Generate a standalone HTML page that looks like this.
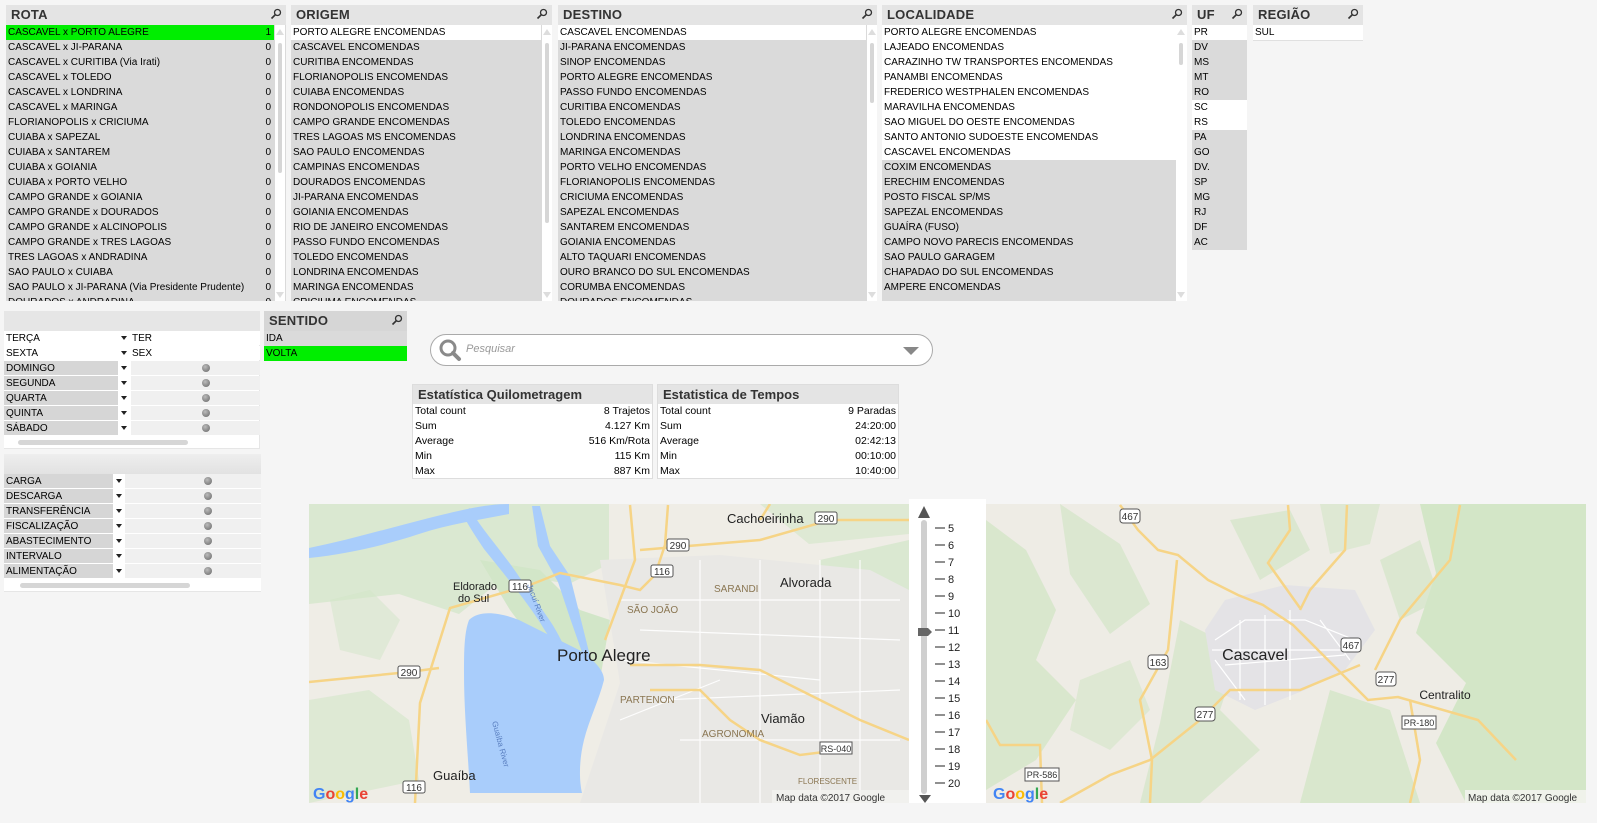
<!DOCTYPE html>
<html><head><meta charset="utf-8">
<style>
*{margin:0;padding:0;box-sizing:border-box}
body{width:1597px;height:823px;background:#f5f5f5;font-family:"Liberation Sans",sans-serif;font-size:10px;color:#000;position:relative;overflow:hidden}
.abs{position:absolute}
.lb{position:absolute;background:#fff;overflow:hidden}
.hd{position:absolute;left:0;right:0;top:0;height:20px;background:#e4e4e4;font-size:13px;color:#333;padding-left:5px;line-height:20px;font-weight:bold;letter-spacing:0.2px}
.mg{position:absolute;right:4px;top:3px;width:12px;height:12px}
.rows{position:absolute;left:0;top:20px}
.r{height:15px;line-height:15px;padding-left:2px;white-space:nowrap;background:#dadada;position:relative}
.w{background:#fff}
.g{background:#00ee00}
.n{position:absolute;right:3px;top:0}
.sb{position:absolute;top:20px;bottom:0;width:10px;background:#fff}
.sb .th{position:absolute;left:3px;width:4px;background:#d6d6d6;border-radius:2px}
.sb .up,.sb .dn{position:absolute;left:1px;width:0;height:0;border-left:4px solid transparent;border-right:4px solid transparent}
.sb .up{top:4px;border-bottom:6px solid #ddd}
.sb .dn{bottom:3px;border-top:6px solid #ddd}
.tb .row{position:absolute;left:0;height:15px;line-height:15px;width:100%}
.tb .lab{position:absolute;left:0;top:0;height:14px;background:#d6d6d6;padding-left:2px}
.tb .ar{position:absolute;top:5px;width:0;height:0;border-left:3px solid transparent;border-right:3px solid transparent;border-top:4px solid #222}
.tb .val{position:absolute;top:0;height:14px;background:#f0f0f0;padding-left:1px}
.tb .dot{position:absolute;top:3px;width:8px;height:8px;border-radius:50%;background:radial-gradient(circle at 40% 35%,#bbb,#666)}
.st{position:absolute;background:#fff;border:1px solid #ddd;font-size:10.5px}
.st .h{height:19px;background:#e4e4e4;font-size:13px;font-weight:bold;color:#333;padding-left:5px;line-height:19px}
.st .rr{height:15px;line-height:15px;padding:0 2px;display:flex;justify-content:space-between}
</style></head><body>

<!-- ROTA -->
<div class="lb" style="left:6px;top:5px;width:280px;height:296px;background:#dadada">
<div class="hd">ROTA<svg class="mg" viewBox="0 0 12 12"><circle cx="7.5" cy="4.5" r="3" fill="none" stroke="#333" stroke-width="1.3"/><path d="M5.5 6.5L1.5 10.5" stroke="#333" stroke-width="1.6"/></svg></div>
<div class="rows" style="width:268px">
<div class="r g">CASCAVEL x PORTO ALEGRE<span class="n">1</span></div>
<div class="r">CASCAVEL x JI-PARANA<span class="n">0</span></div>
<div class="r">CASCAVEL x CURITIBA (Via Irati)<span class="n">0</span></div>
<div class="r">CASCAVEL x TOLEDO<span class="n">0</span></div>
<div class="r">CASCAVEL x LONDRINA<span class="n">0</span></div>
<div class="r">CASCAVEL x MARINGA<span class="n">0</span></div>
<div class="r">FLORIANOPOLIS x CRICIUMA<span class="n">0</span></div>
<div class="r">CUIABA x SAPEZAL<span class="n">0</span></div>
<div class="r">CUIABA x SANTAREM<span class="n">0</span></div>
<div class="r">CUIABA x GOIANIA<span class="n">0</span></div>
<div class="r">CUIABA x PORTO VELHO<span class="n">0</span></div>
<div class="r">CAMPO GRANDE x GOIANIA<span class="n">0</span></div>
<div class="r">CAMPO GRANDE x DOURADOS<span class="n">0</span></div>
<div class="r">CAMPO GRANDE x ALCINOPOLIS<span class="n">0</span></div>
<div class="r">CAMPO GRANDE x TRES LAGOAS<span class="n">0</span></div>
<div class="r">TRES LAGOAS x ANDRADINA<span class="n">0</span></div>
<div class="r">SAO PAULO x CUIABA<span class="n">0</span></div>
<div class="r">SAO PAULO x JI-PARANA (Via Presidente Prudente)<span class="n">0</span></div>
<div class="r">DOURADOS x ANDRADINA<span class="n">0</span></div>
</div>
<div class="sb" style="left:269px"><div class="up"></div><div class="th" style="top:18px;height:130px"></div><div class="dn"></div></div>
</div>

<!-- ORIGEM -->
<div class="lb" style="left:291px;top:5px;width:261px;height:296px;background:#dadada">
<div class="hd">ORIGEM<svg class="mg" viewBox="0 0 12 12"><circle cx="7.5" cy="4.5" r="3" fill="none" stroke="#333" stroke-width="1.3"/><path d="M5.5 6.5L1.5 10.5" stroke="#333" stroke-width="1.6"/></svg></div>
<div class="rows" style="width:250px">
<div class="r w">PORTO ALEGRE ENCOMENDAS</div>
<div class="r">CASCAVEL ENCOMENDAS</div>
<div class="r">CURITIBA ENCOMENDAS</div>
<div class="r">FLORIANOPOLIS ENCOMENDAS</div>
<div class="r">CUIABA ENCOMENDAS</div>
<div class="r">RONDONOPOLIS ENCOMENDAS</div>
<div class="r">CAMPO GRANDE ENCOMENDAS</div>
<div class="r">TRES LAGOAS MS ENCOMENDAS</div>
<div class="r">SAO PAULO ENCOMENDAS</div>
<div class="r">CAMPINAS ENCOMENDAS</div>
<div class="r">DOURADOS ENCOMENDAS</div>
<div class="r">JI-PARANA ENCOMENDAS</div>
<div class="r">GOIANIA ENCOMENDAS</div>
<div class="r">RIO DE JANEIRO ENCOMENDAS</div>
<div class="r">PASSO FUNDO ENCOMENDAS</div>
<div class="r">TOLEDO ENCOMENDAS</div>
<div class="r">LONDRINA ENCOMENDAS</div>
<div class="r">MARINGA ENCOMENDAS</div>
<div class="r">CRICIUMA ENCOMENDAS</div>
</div>
<div class="sb" style="left:251px"><div class="up"></div><div class="th" style="top:18px;height:180px"></div><div class="dn"></div></div>
</div>

<!-- DESTINO -->
<div class="lb" style="left:558px;top:5px;width:319px;height:296px;background:#dadada">
<div class="hd">DESTINO<svg class="mg" viewBox="0 0 12 12"><circle cx="7.5" cy="4.5" r="3" fill="none" stroke="#333" stroke-width="1.3"/><path d="M5.5 6.5L1.5 10.5" stroke="#333" stroke-width="1.6"/></svg></div>
<div class="rows" style="width:308px">
<div class="r w">CASCAVEL ENCOMENDAS</div>
<div class="r">JI-PARANA ENCOMENDAS</div>
<div class="r">SINOP ENCOMENDAS</div>
<div class="r">PORTO ALEGRE ENCOMENDAS</div>
<div class="r">PASSO FUNDO ENCOMENDAS</div>
<div class="r">CURITIBA ENCOMENDAS</div>
<div class="r">TOLEDO ENCOMENDAS</div>
<div class="r">LONDRINA ENCOMENDAS</div>
<div class="r">MARINGA ENCOMENDAS</div>
<div class="r">PORTO VELHO ENCOMENDAS</div>
<div class="r">FLORIANOPOLIS ENCOMENDAS</div>
<div class="r">CRICIUMA ENCOMENDAS</div>
<div class="r">SAPEZAL ENCOMENDAS</div>
<div class="r">SANTAREM ENCOMENDAS</div>
<div class="r">GOIANIA ENCOMENDAS</div>
<div class="r">ALTO TAQUARI ENCOMENDAS</div>
<div class="r">OURO BRANCO DO SUL ENCOMENDAS</div>
<div class="r">CORUMBA ENCOMENDAS</div>
<div class="r">DOURADOS ENCOMENDAS</div>
</div>
<div class="sb" style="left:309px"><div class="up"></div><div class="th" style="top:18px;height:60px"></div><div class="dn"></div></div>
</div>

<!-- LOCALIDADE -->
<div class="lb" style="left:882px;top:5px;width:305px;height:296px">
<div class="hd">LOCALIDADE<svg class="mg" viewBox="0 0 12 12"><circle cx="7.5" cy="4.5" r="3" fill="none" stroke="#333" stroke-width="1.3"/><path d="M5.5 6.5L1.5 10.5" stroke="#333" stroke-width="1.6"/></svg></div>
<div class="rows" style="width:294px;background:#dadada;height:278px">
<div class="r w">PORTO ALEGRE ENCOMENDAS</div>
<div class="r w">LAJEADO ENCOMENDAS</div>
<div class="r w">CARAZINHO TW TRANSPORTES ENCOMENDAS</div>
<div class="r w">PANAMBI ENCOMENDAS</div>
<div class="r w">FREDERICO WESTPHALEN ENCOMENDAS</div>
<div class="r w">MARAVILHA ENCOMENDAS</div>
<div class="r w">SAO MIGUEL DO OESTE ENCOMENDAS</div>
<div class="r w">SANTO ANTONIO SUDOESTE ENCOMENDAS</div>
<div class="r w">CASCAVEL ENCOMENDAS</div>
<div class="r">COXIM ENCOMENDAS</div>
<div class="r">ERECHIM ENCOMENDAS</div>
<div class="r">POSTO FISCAL SP/MS</div>
<div class="r">SAPEZAL ENCOMENDAS</div>
<div class="r">GUAÍRA (FUSO)</div>
<div class="r">CAMPO NOVO PARECIS ENCOMENDAS</div>
<div class="r">SAO PAULO GARAGEM</div>
<div class="r">CHAPADAO DO SUL ENCOMENDAS</div>
<div class="r">AMPERE ENCOMENDAS</div>
</div>
<div class="sb" style="left:294px"><div class="up"></div><div class="th" style="top:18px;height:22px"></div><div class="dn"></div></div>
</div>

<!-- UF -->
<div class="lb" style="left:1192px;top:5px;width:55px;height:245px;background:#dadada">
<div class="hd">UF<svg class="mg" viewBox="0 0 12 12"><circle cx="7.5" cy="4.5" r="3" fill="none" stroke="#333" stroke-width="1.3"/><path d="M5.5 6.5L1.5 10.5" stroke="#333" stroke-width="1.6"/></svg></div>
<div class="rows" style="width:55px">
<div class="r w">PR</div><div class="r">DV</div><div class="r">MS</div><div class="r">MT</div><div class="r">RO</div><div class="r w">SC</div><div class="r w">RS</div><div class="r">PA</div><div class="r">GO</div><div class="r">DV.</div><div class="r">SP</div><div class="r">MG</div><div class="r">RJ</div><div class="r">DF</div><div class="r">AC</div>
</div></div>

<!-- REGIAO -->
<div class="lb" style="left:1253px;top:5px;width:110px;height:36px;border-bottom:1px solid #e0e0e0">
<div class="hd">REGIÃO<svg class="mg" viewBox="0 0 12 12"><circle cx="7.5" cy="4.5" r="3" fill="none" stroke="#333" stroke-width="1.3"/><path d="M5.5 6.5L1.5 10.5" stroke="#333" stroke-width="1.6"/></svg></div>
<div class="rows" style="width:110px"><div class="r w">SUL</div></div>
</div>

<!-- weekday table -->
<div class="abs tb" style="left:4px;top:311px;width:256px;height:138px;background:#fff;border-right:1px solid #e6e6e6;border-bottom:1px solid #e6e6e6">
<div style="height:20px;background:#e6e6e6"></div>
<div class="row" style="top:20px"><div class="lab" style="width:117px;background:#fff">TERÇA</div><div class="ar" style="left:117px"></div><div class="val" style="left:127px;width:129px;background:#fff">TER</div></div>
<div class="row" style="top:35px"><div class="lab" style="width:117px;background:#fff">SEXTA</div><div class="ar" style="left:117px"></div><div class="val" style="left:127px;width:129px;background:#fff">SEX</div></div>
<div class="row" style="top:50px"><div class="lab" style="width:114px">DOMINGO</div><div class="ar" style="left:117px"></div><div class="val" style="left:127px;width:129px"></div><div class="dot" style="left:198px"></div></div>
<div class="row" style="top:65px"><div class="lab" style="width:114px">SEGUNDA</div><div class="ar" style="left:117px"></div><div class="val" style="left:127px;width:129px"></div><div class="dot" style="left:198px"></div></div>
<div class="row" style="top:80px"><div class="lab" style="width:114px">QUARTA</div><div class="ar" style="left:117px"></div><div class="val" style="left:127px;width:129px"></div><div class="dot" style="left:198px"></div></div>
<div class="row" style="top:95px"><div class="lab" style="width:114px">QUINTA</div><div class="ar" style="left:117px"></div><div class="val" style="left:127px;width:129px"></div><div class="dot" style="left:198px"></div></div>
<div class="row" style="top:110px"><div class="lab" style="width:114px">SÁBADO</div><div class="ar" style="left:117px"></div><div class="val" style="left:127px;width:129px"></div><div class="dot" style="left:198px"></div></div>
<div class="abs" style="left:14px;top:129px;width:170px;height:5px;background:#d6d6d6;border-radius:3px"></div>
</div>

<!-- SENTIDO -->
<div class="lb" style="left:264px;top:311px;width:143px;height:50px;background:#dadada">
<div class="hd" style="background:#d6d6d6">SENTIDO<svg class="mg" viewBox="0 0 12 12"><circle cx="7.5" cy="4.5" r="3" fill="none" stroke="#333" stroke-width="1.3"/><path d="M5.5 6.5L1.5 10.5" stroke="#333" stroke-width="1.6"/></svg></div>
<div class="rows" style="width:143px"><div class="r">IDA</div><div class="r g">VOLTA</div></div>
</div>

<!-- second table -->
<div class="abs tb" style="left:4px;top:454px;width:257px;height:138px;background:#fff;border-bottom:1px solid #e6e6e6">
<div style="height:20px;background:linear-gradient(#eee,#e2e2e2)"></div>
<div class="row" style="top:20px"><div class="lab" style="width:109px">CARGA</div><div class="ar" style="left:112px"></div><div class="val" style="left:121px;width:136px"></div><div class="dot" style="left:200px"></div></div>
<div class="row" style="top:35px"><div class="lab" style="width:109px">DESCARGA</div><div class="ar" style="left:112px"></div><div class="val" style="left:121px;width:136px"></div><div class="dot" style="left:200px"></div></div>
<div class="row" style="top:50px"><div class="lab" style="width:109px">TRANSFERÊNCIA</div><div class="ar" style="left:112px"></div><div class="val" style="left:121px;width:136px"></div><div class="dot" style="left:200px"></div></div>
<div class="row" style="top:65px"><div class="lab" style="width:109px">FISCALIZAÇÃO</div><div class="ar" style="left:112px"></div><div class="val" style="left:121px;width:136px"></div><div class="dot" style="left:200px"></div></div>
<div class="row" style="top:80px"><div class="lab" style="width:109px">ABASTECIMENTO</div><div class="ar" style="left:112px"></div><div class="val" style="left:121px;width:136px"></div><div class="dot" style="left:200px"></div></div>
<div class="row" style="top:95px"><div class="lab" style="width:109px">INTERVALO</div><div class="ar" style="left:112px"></div><div class="val" style="left:121px;width:136px"></div><div class="dot" style="left:200px"></div></div>
<div class="row" style="top:110px"><div class="lab" style="width:109px">ALIMENTAÇÃO</div><div class="ar" style="left:112px"></div><div class="val" style="left:121px;width:136px"></div><div class="dot" style="left:200px"></div></div>
<div class="abs" style="left:16px;top:129px;width:170px;height:5px;background:#d6d6d6;border-radius:3px"></div>
</div>

<!-- search -->
<div class="abs" style="left:430px;top:334px;width:503px;height:32px;border:1px solid #aaa;border-radius:16px;background:#fff"></div>
<svg class="abs" style="left:437px;top:338px" width="28" height="26" viewBox="0 0 28 26"><circle cx="11" cy="10" r="7" fill="none" stroke="#8a8a8a" stroke-width="3"/><path d="M16 15L22 21" stroke="#8a8a8a" stroke-width="4" stroke-linecap="round"/></svg>
<div class="abs" style="left:466px;top:343px;font-size:11px;font-style:italic;color:#999">Pesquisar</div>
<div class="abs" style="left:903px;top:347px;width:0;height:0;border-left:8px solid transparent;border-right:8px solid transparent;border-top:8px solid #888"></div>

<!-- stats -->
<div class="st" style="left:412px;top:384px;width:241px;height:95px">
<div class="h">Estatística Quilometragem</div>
<div class="rr"><span>Total count</span><span>8 Trajetos</span></div>
<div class="rr"><span>Sum</span><span>4.127 Km</span></div>
<div class="rr"><span>Average</span><span>516 Km/Rota</span></div>
<div class="rr"><span>Min</span><span>115 Km</span></div>
<div class="rr"><span>Max</span><span>887 Km</span></div>
</div>
<div class="st" style="left:657px;top:384px;width:242px;height:95px">
<div class="h">Estatistica de Tempos</div>
<div class="rr"><span>Total count</span><span>9 Paradas</span></div>
<div class="rr"><span>Sum</span><span>24:20:00</span></div>
<div class="rr"><span>Average</span><span>02:42:13</span></div>
<div class="rr"><span>Min</span><span>00:10:00</span></div>
<div class="rr"><span>Max</span><span>10:40:00</span></div>
</div>

<!-- map 1 -->
<svg class="abs" style="left:309px;top:504px" width="600" height="299" viewBox="309 504 600 299" font-family="Liberation Sans, sans-serif">
<rect x="309" y="504" width="600" height="299" fill="#efede6"/>
<g fill="#d2e6c8">
<path d="M309 504h300v60l-40 20-60-10-50 40-60-20-90 10z" opacity=".7"/>
<path d="M480 560l60 10 40 40 30 10-10 60-40 20-20-50-30-40z"/>
<path d="M309 700l60-10 40 30 10 60-110 23z" opacity=".6"/>
<path d="M700 740l80-20 60 10 70-20v93H690z" opacity=".8"/>
<path d="M820 560l89-20v120l-60 10-40-40z" opacity=".7"/>
<path d="M760 504h149v30l-100 10z" opacity=".6"/>
<path d="M330 600l40-10 30 30-20 40-40-10z" opacity=".5"/>
</g>
<path d="M600 560l120 -5 150 15 39 20v213H580l40-120z" fill="#e9e8e5"/>
<g fill="#a9cdfb">
<path d="M309 548c40-8 80-20 120-30s60-14 80-14v10c-30 6-60 10-90 20s-70 20-110 24z"/>
<path d="M470 508c10 20 30 40 50 70s30 40 40 60c5 10 10 20 20 30l-6 6c-10-12-20-30-30-45-15-25-40-55-60-80-8-12-16-24-22-36z"/>
<path d="M540 506l10 40 20 30 10 40 10 40-6 2-14-40-12-36-20-36-6-40z"/>
<path d="M469 620c10-10 30-8 50 0 20 10 40 20 60 30 15 10 25 20 25 30-5 20-15 40-20 60-5 20-5 40-2 53H470c-2-40-6-80-6-120 0-20 0-40 5-53z"/>
</g>
<g fill="none" stroke="#fff" stroke-width="1.2" opacity=".9">
<path d="M620 600l280 0M640 630l260 10M620 660l200 20M660 700l240 -10M680 740l220 0M700 560v243M760 560v243M820 560v243M860 560v243M620 720l100-40"/>
</g>
<g fill="none" stroke="#f6d486" stroke-width="2.5">
<path d="M309 682l100-10 30-4"/>
<path d="M415 803l5-100 30-95 80-23 30-12 60 12 20 5 15-15 10-30 3-40"/>
<path d="M630 505l5 55-30 80"/>
<path d="M640 550l60-5 60-5 70-20h79"/>
<path d="M630 665l70 0 60 5 40 20 60 30 49 20"/>
<path d="M650 690l50 0 30 30 30 20 40 15 40-5"/>
<path d="M760 520l10-16"/>
</g>
<g font-size="10" fill="#333" text-anchor="middle">
<rect x="815" y="512" width="22" height="12" rx="2" fill="#fff" stroke="#555"/><text x="826" y="522">290</text>
<rect x="667" y="539" width="22" height="12" rx="2" fill="#fff" stroke="#555"/><text x="678" y="549">290</text>
<rect x="651" y="565" width="22" height="12" rx="2" fill="#fff" stroke="#555"/><text x="662" y="575">116</text>
<rect x="509" y="580" width="22" height="12" rx="2" fill="#fff" stroke="#555"/><text x="520" y="590">116</text>
<rect x="398" y="666" width="22" height="12" rx="2" fill="#fff" stroke="#555"/><text x="409" y="676">290</text>
<rect x="403" y="781" width="22" height="12" rx="2" fill="#fff" stroke="#555"/><text x="414" y="791">116</text>
<rect x="820" y="742" width="32" height="12" fill="#fff" stroke="#555"/><text x="836" y="752" font-size="9">RS-040</text>
</g>
<g fill="#222">
<text x="727" y="523" font-size="13">Cachoeirinha</text>
<text x="780" y="587" font-size="13">Alvorada</text>
<text x="453" y="590" font-size="11">Eldorado</text>
<text x="458" y="602" font-size="11">do Sul</text>
<text x="557" y="661" font-size="17">Porto Alegre</text>
<text x="761" y="723" font-size="13">Viamão</text>
<text x="433" y="780" font-size="13">Guaíba</text>
</g>
<g fill="#8a7652" font-size="10">
<text x="714" y="592">SARANDI</text><text x="627" y="613">SÃO JOÃO</text><text x="620" y="703">PARTENON</text><text x="702" y="737">AGRONOMIA</text><text x="798" y="784" font-size="8">FLORESCENTE</text>
</g>
<text x="527" y="585" font-size="8" fill="#5a7fc0" transform="rotate(70 527 585)">Jacuí River</text>
<text x="492" y="722" font-size="8" fill="#5a7fc0" transform="rotate(75 492 722)">Guaíba River</text>
<text x="313" y="799" font-size="16" font-weight="bold"><tspan fill="#4285f4">G</tspan><tspan fill="#ea4335">o</tspan><tspan fill="#fbbc05">o</tspan><tspan fill="#4285f4">g</tspan><tspan fill="#34a853">l</tspan><tspan fill="#ea4335">e</tspan></text>
<rect x="772" y="790" width="137" height="13" fill="#f3f3f0" opacity=".8"/>
<text x="776" y="801" font-size="10" fill="#333">Map data ©2017 Google</text>
</svg>

<!-- slider -->
<div class="abs" style="left:909px;top:499px;width:77px;height:304px;background:#fff"></div>
<svg class="abs" style="left:909px;top:499px" width="77" height="304" viewBox="909 499 77 304" font-family="Liberation Sans, sans-serif">
<path d="M918 518l6-12 6 12z" fill="#555"/>
<rect x="921" y="520" width="6" height="274" rx="3" fill="#cfcfcf"/>
<path d="M919 795h12l-6 8z" fill="#555"/>
<path d="M918 628h10l4 4-4 4h-10z" fill="#666"/>
<g font-size="11" fill="#222">
<g stroke="#222" stroke-width="1"><path d="M935 528h10M935 545h10M935 562h10M935 579h10M935 596h10M935 613h10M935 630h10M935 647h10M935 664h10M935 681h10M935 698h10M935 715h10M935 732h10M935 749h10M935 766h10M935 783h10"/></g>
<text x="948" y="532">5</text><text x="948" y="549">6</text><text x="948" y="566">7</text><text x="948" y="583">8</text><text x="948" y="600">9</text><text x="948" y="617">10</text><text x="948" y="634">11</text><text x="948" y="651">12</text><text x="948" y="668">13</text><text x="948" y="685">14</text><text x="948" y="702">15</text><text x="948" y="719">16</text><text x="948" y="736">17</text><text x="948" y="753">18</text><text x="948" y="770">19</text><text x="948" y="787">20</text>
</g>
</svg>

<!-- map 2 -->
<svg class="abs" style="left:986px;top:504px" width="600" height="299" viewBox="986 504 600 299" font-family="Liberation Sans, sans-serif">
<rect x="986" y="504" width="600" height="299" fill="#eeece5"/>
<g fill="#d3e6c7">
<path d="M986 520l40 30 30 60 -20 50 40 40-40 60-50 30z" opacity=".8"/>
<path d="M1060 504l60 40 30 60-40 30-40-60z" opacity=".7"/>
<path d="M1180 620l60 30-20 60 40 40-60 53h-60l20-80z" opacity=".7"/>
<path d="M1420 504h166v299h-120l-30-60 30-60-50-50 20-60z"/>
<path d="M1330 690l60 20 30 93h-120z" opacity=".8"/>
<path d="M1230 520l60-10 20 40-50 30z" opacity=".7"/>
<path d="M1380 560l40-20 20 60-40 20z" opacity=".7"/>
<path d="M1080 680l50-20 20 50-40 40-40-20z" opacity=".6"/>
<path d="M1320 504h60l-10 40-40 10z" opacity=".6"/>
</g>
<path d="M1205 630l20-30 60-15 70 5 20 40-30 40-40 20-50 20-40-20z" fill="#e4e3e6"/>
<g fill="none" stroke="#fff" stroke-width="1.2"><path d="M1215 640l30-20 60 0 50 20M1212 650l140 0M1225 665l120-10M1240 620v80M1265 615v90M1290 610v90M1215 660l30 40M1320 620l30 40"/></g>
<g fill="none" stroke="#f6d486" stroke-width="2.5">
<path d="M1120 505l18 25 20 20 20 5 30 25 30 15 25 10 30 20 15 15 20 20 20 20 20 20 30-3 80 23 38 40"/>
<path d="M1288 505l2 25-22 33 32 45"/>
<path d="M1347 505l-2 45-35 40-10 20"/>
<path d="M1177 560l-9 90-28 50 12 60-2 43"/>
<path d="M1360 665l-60 25-70 0-30 30-50 40-40 15-50 28"/>
<path d="M1460 505l-10 55-50 60-25 50"/>
<path d="M1410 700l10 60-10 43"/>
<path d="M986 720l14 25 40 0 2 58"/>
</g>
<g font-size="10" fill="#333" text-anchor="middle">
<rect x="1120" y="509" width="20" height="14" rx="3" fill="#fff" stroke="#555"/><text x="1130" y="520">467</text>
<rect x="1341" y="638" width="20" height="14" rx="3" fill="#fff" stroke="#555"/><text x="1351" y="649">467</text>
<rect x="1148" y="655" width="20" height="14" rx="3" fill="#fff" stroke="#555"/><text x="1158" y="666">163</text>
<rect x="1376" y="672" width="20" height="14" rx="3" fill="#fff" stroke="#555"/><text x="1386" y="683">277</text>
<rect x="1195" y="707" width="20" height="14" rx="3" fill="#fff" stroke="#555"/><text x="1205" y="718">277</text>
<rect x="1402" y="716" width="34" height="13" fill="#fff" stroke="#555"/><text x="1419" y="726" font-size="9">PR-180</text>
<rect x="1025" y="768" width="34" height="13" fill="#fff" stroke="#555"/><text x="1042" y="778" font-size="9">PR-586</text>
</g>
<text x="1255" y="660" font-size="16" fill="#222" text-anchor="middle">Cascavel</text>
<text x="1445" y="699" font-size="12" fill="#222" text-anchor="middle">Centralito</text>
<text x="993" y="799" font-size="16" font-weight="bold"><tspan fill="#4285f4">G</tspan><tspan fill="#ea4335">o</tspan><tspan fill="#fbbc05">o</tspan><tspan fill="#4285f4">g</tspan><tspan fill="#34a853">l</tspan><tspan fill="#ea4335">e</tspan></text>
<rect x="1465" y="790" width="121" height="13" fill="#f3f3f0" opacity=".85"/>
<text x="1468" y="801" font-size="10" fill="#333">Map data ©2017 Google</text>
</svg>

</body></html>
